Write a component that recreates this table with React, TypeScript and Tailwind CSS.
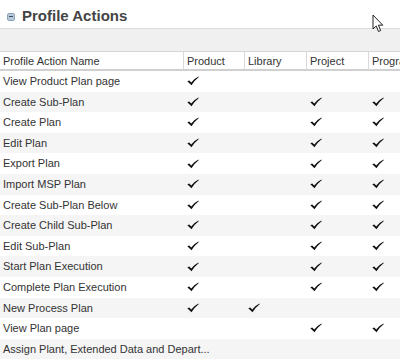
import React from "react";

const rows: [string, boolean, boolean, boolean, boolean][] = [
  ["View Product Plan page", true, false, false, false],
  ["Create Sub-Plan", true, false, true, true],
  ["Create Plan", true, false, true, true],
  ["Edit Plan", true, false, true, true],
  ["Export Plan", true, false, true, true],
  ["Import MSP Plan", true, false, true, true],
  ["Create Sub-Plan Below", true, false, true, true],
  ["Create Child Sub-Plan", true, false, true, true],
  ["Edit Sub-Plan", true, false, true, true],
  ["Start Plan Execution", true, false, true, true],
  ["Complete Plan Execution", true, false, true, true],
  ["New Process Plan", true, true, false, false],
  ["View Plan page", false, false, true, true],
  ["Assign Plant, Extended Data and Depart...", false, false, false, false],
];

function Check() {
  return (
    <svg width="12" height="10" viewBox="0 0 12 10">
      <path d="M0.3 5.2 L2.2 4.4 L4.2 6.6 Q7 2.8 11.5 0.6 L11.7 1.2 Q7.8 4 4.5 9.3 Z" fill="#111" />
    </svg>
  );
}

const cols = "grid grid-cols-[183px_61px_62px_62px_62px]";

export default function App() {
  return (
    <div className="relative w-[400px] h-[364px] overflow-hidden bg-white" style={{ fontFamily: '"Liberation Sans", Arial, sans-serif' }}>
      <div className="h-[29px] flex items-center border-b border-[#dcdcdc] pl-[7px] pt-[5px]">
        <div className="w-[8px] h-[8px] rounded-[2px] bg-[#b9c9dc] border border-[#8ea4bd] flex items-center justify-center">
          <div className="w-[4px] h-[1px] bg-[#3a4a5c]" />
        </div>
        <span className="ml-[7px] text-[15px] font-bold text-[#444]">Profile Actions</span>
      </div>
      <div className="h-[23px] bg-[#f0f0f0] border-b border-[#d4d4d4]" />
      <div className={`${cols} h-[19px] text-[11px] text-[#333]`}>
        {["Profile Action Name", "Product", "Library", "Project", "Program"].map((h, i) => (
          <div key={h} className={`pl-[3px] pt-[1px] flex items-center border-b-2 border-[#d0d0d0] whitespace-nowrap overflow-hidden ${i === 0 ? "" : "border-l border-l-[#d8d8d8]"}`}>
            {h}
          </div>
        ))}
      </div>
      {rows.map((r, idx) => (
        <div key={r[0]} className={`${cols} h-[20.6px] text-[11px] text-[#333] ${idx % 2 === 1 ? "bg-[#f5f5f5]" : "bg-white"}`}>
          <div className="pl-[3px] flex items-center whitespace-nowrap overflow-visible relative z-10">{r[0]}</div>
          {[r[1], r[2], r[3], r[4]].map((c, j) => (
            <div key={j} className="pl-[4px] flex items-center">
              {c ? <Check /> : null}
            </div>
          ))}
        </div>
      ))}
      <svg className="absolute left-[372px] top-[14px]" width="13" height="19" viewBox="0 0 13 19">
        <path d="M1 1 L1 15 L4.2 12 L6.5 17.5 L8.7 16.5 L6.4 11.2 L10.8 11.2 Z" fill="#fff" stroke="#222" strokeWidth="1" strokeLinejoin="round" />
      </svg>
    </div>
  );
}
